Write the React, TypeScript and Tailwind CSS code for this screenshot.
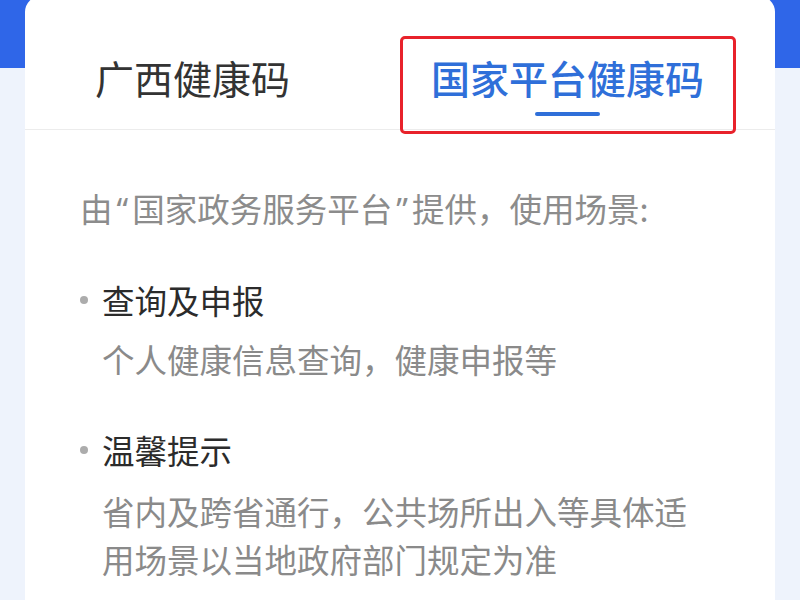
import React from 'react';

const font = "font-['Noto_Sans_CJK_SC',sans-serif]";

const App = () => {
  return (
    <div
      className={`w-[800px] h-[600px] overflow-hidden bg-[linear-gradient(to_bottom,#2f66e8_68px,#eef3fc_68px)] ${font}`}
    >
      {/*card*/}
      <div className="mx-[25px] mt-[-4px] h-[620px] bg-white rounded-t-[16px]">
        {/*tabs*/}
        <div className="flex h-[134px] border-b border-[#ececec]">
          <div className="w-[335px] pt-[62px] text-center text-[39px] leading-[39px] text-[#333]">
            广西健康码
          </div>
          <div className="flex-1 flex justify-center pt-[40px]">
            <div className="relative z-10 w-[336px] h-[98px] border-[3px] border-[#e8222b] rounded-[5px] flex flex-col items-center pt-[19px]">
              <span className="text-[39px] leading-[39px] font-medium text-[#2f6fd9]">
                国家平台健康码
              </span>
              <span className="mt-[15px] w-[65px] h-[4px] rounded-full bg-[#2f6fd9]" />
            </div>
          </div>
        </div>

        {/*body*/}
        <div className="pl-[55px] pt-[54px] text-[32.5px] leading-[48px]">
          <p className="text-[#8c8c8c]">
            由<span className="mx-[4px] font-['Noto_Sans',sans-serif]">“</span>国家政务服务平台
            <span className="mx-[4px] font-['Noto_Sans',sans-serif]">”</span>提供，使用场景:
          </p>

          <div className="mt-[42px]">
            <div className="flex items-center gap-[14px] text-[#2b2b2b]">
              <span className="w-[8px] h-[8px] rounded-full bg-[#acacac]" />
              查询及申报
            </div>
            <p className="mt-[11px] ml-[22px] w-[600px] text-[#8a8a8a]">
              个人健康信息查询，健康申报等
            </p>
          </div>

          <div className="mt-[43px]">
            <div className="flex items-center gap-[14px] text-[#2b2b2b]">
              <span className="w-[8px] h-[8px] rounded-full bg-[#acacac]" />
              温馨提示
            </div>
            <p className="mt-[13px] ml-[22px] w-[600px] text-[#8a8a8a]">
              省内及跨省通行，公共场所出入等具体适用场景以当地政府部门规定为准
            </p>
          </div>
        </div>
      </div>
    </div>
  );
};

export default App;
